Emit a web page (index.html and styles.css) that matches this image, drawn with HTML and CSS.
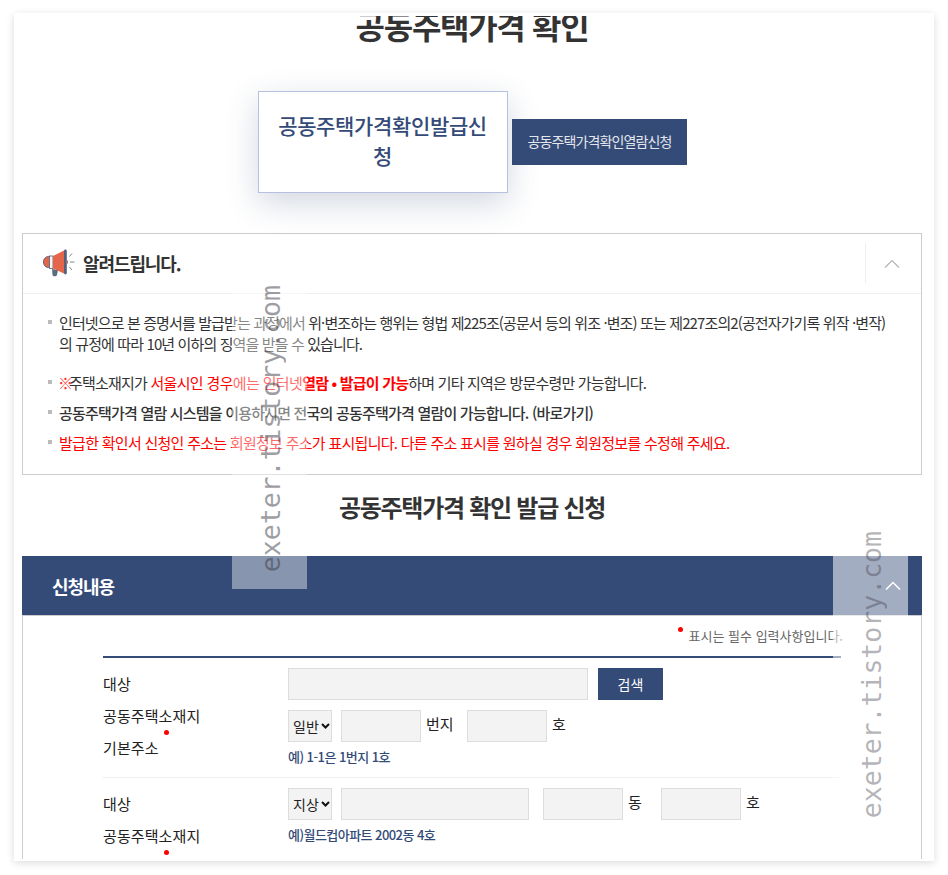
FILE: index.html
```html
<!DOCTYPE html>
<html lang="ko">
<head>
<meta charset="utf-8">
<title>공동주택가격 확인</title>
<link rel="stylesheet" href="styles.css">
</head>
<body>
<main class="card">
  <div class="scroll">
    <h1 class="page-title">공동주택가격 확인</h1>
    <div class="tabs">
      <a class="tab tab-on">공동주택가격확인발급신청</a>
      <a class="tab tab-off">공동주택가격확인열람신청</a>
    </div>
    <section class="notice">
      <header class="notice-head">
        <svg class="mega" viewBox="0 0 32 28" width="32" height="28" aria-hidden="true">
          <path d="M9 20l6 1-1 5c-.4 1.700-4 1.700-4.500 0z" fill="#5d6d80"/>
          <path d="M7 7.500C3 7 .5 9.500.5 13s2.500 6 6.500 5.500z" fill="#e4654a" stroke="#54617a" stroke-width="1"/>
          <rect x="6.500" y="7" width="3.500" height="12.500" fill="#f4f4f6" stroke="#54617a" stroke-width=".8"/>
          <path d="M10 7L21 1.500v23L10 19.500z" fill="#e4654a"/>
          <rect x="21" y=".5" width="2.800" height="25" rx="1.400" fill="#54617a"/>
          <path d="M24 11c1.500.5 1.500 3.500 0 4" fill="#e4654a"/>
          <path d="M26.500 7.500l2.500-3M27 13h4.500M26.500 18l2.500 3" stroke="#7d8796" stroke-width="1" fill="none"/>
        </svg>
        <h2 class="notice-title">알려드립니다.</h2>
        <div class="notice-toggle">
          <svg viewBox="0 0 16 9" width="16" height="9" aria-hidden="true"><path d="M1 8.500L8 1.500l7 7" fill="none" stroke="#b4b4b4" stroke-width="1.200"/></svg>
        </div>
      </header>
      <ul class="notice-list">
        <li class="gap">인터넷으로 본 증명서를 발급받는 과정에서 위·변조하는 행위는 형법 제225조(공문서 등의 위조 ·변조) 또는 제227조의2(공전자가기록 위작 ·변작)<br>의 규정에 따라 10년 이하의 징역을 받을 수 있습니다.</li>
        <li><span class="red mark-ref">※</span>주택소재지가 <span class="red seoul">서울시인 경우에는 인터넷</span><b class="red">열람 • 발급이 가능</b>하며 기타 지역은 방문수령만 가능합니다.</li>
        <li class="strong">공동주택가격 열람 시스템을 이용하시면 전국의 공동주택가격 열람이 가능합니다. (바로가기)</li>
        <li class="red wide">발급한 확인서 신청인 주소는 회원정보 주소가 표시됩니다. 다른 주소 표시를 원하실 경우 회원정보를 수정해 주세요.</li>
      </ul>
    </section>
    <h2 class="sub-title">공동주택가격 확인 발급 신청</h2>
    <section class="apply">
      <header class="apply-head">
        <h3 class="apply-title">신청내용</h3>
        <svg viewBox="0 0 16 9" width="16" height="9" aria-hidden="true"><path d="M1 8.500L8 1.500l7 7" fill="none" stroke="#fff" stroke-width="1.500"/></svg>
      </header>
      <div class="apply-body">
        <p class="req-note"><i class="dot"></i>표시는 필수 입력사항입니다.</p>
        <div class="form">
          <div class="group">
            <div class="labels">
              <span>대상</span>
              <span class="req">공동주택소재지</span>
              <span>기본주소</span>
            </div>
            <div class="fields">
              <div class="row">
                <input class="inp w300" type="text">
                <button class="search" type="button">검색</button>
              </div>
              <div class="row">
                <select class="sel"><option>일반</option></select>
                <input class="inp w80" type="text">
                <span class="unit u-bunji">번지</span>
                <input class="inp w80" type="text">
                <span class="unit">호</span>
              </div>
              <p class="hint">예) 1-1은 1번지 1호</p>
            </div>
          </div>
          <div class="group group-open">
            <div class="labels">
              <span>대상</span>
              <span class="req">공동주택소재지</span>
            </div>
            <div class="fields">
              <div class="row">
                <select class="sel"><option>지상</option></select>
                <input class="inp w188" type="text">
                <input class="inp w80 m14" type="text">
                <span class="unit u-dong">동</span>
                <input class="inp w80" type="text">
                <span class="unit">호</span>
              </div>
              <p class="hint">예)월드컵아파트 2002동 4호</p>
            </div>
          </div>
        </div>
      </div>
    </section>
  </div>
  <div class="mark mark-a"><span>exeter.tistory.com</span></div>
  <div class="mark mark-b"><span>exeter.tistory.com</span></div>
</main>
</body>
</html>
```
FILE: styles.css
```css
* { box-sizing: border-box; }
html, body { margin: 0; padding: 0; background: #fff; }
body {
  height: 875px;
  overflow: hidden;
  padding: 13px 14px 0;
  font-family: "Noto Sans CJK KR", "Noto Sans", sans-serif;
  color: #222;
}
h1, h2, h3, p, ul { margin: 0; padding: 0; }
.card {
  position: relative;
  width: 920px;
  height: 848px;
  padding: 3px 0 2px;
  background: #fff;
  box-shadow: 0 2px 8px rgba(0, 0, 0, .14);
}
.scroll { height: 100%; overflow: hidden; padding: 0 12px 0 8px; }
.page-title {
  margin-top: -12px;
  height: 44px;
  line-height: 42px;
  text-align: center;
  font-size: 32px;
  font-weight: 700;
  letter-spacing: -1.3px;
  color: #333;
}
.tabs {
  display: flex;
  justify-content: center;
  align-items: center;
  gap: 4px;
  margin-top: 43px;
}
.tab { display: flex; align-items: center; justify-content: center; text-align: center; }
.tab-on {
  width: 250px;
  height: 102px;
  padding: 0 16px 4px;
  background: #fff;
  border: 1px solid #b5c1de;
  box-shadow: 0 10px 30px rgba(52, 75, 120, .22);
  color: #344b78;
  font-size: 21px;
  font-weight: 500;
  line-height: 30px;
  letter-spacing: -.35px;
}
.tab-off {
  width: 175px;
  height: 46px;
  padding: 0 0 3px 1px;
  background: #344b78;
  color: #e4e6ec;
  font-size: 14px;
  letter-spacing: -.9px;
}
.notice {
  margin-top: 40px;
  height: 242px;
  border: 1px solid #ccc;
}
.notice-head {
  display: flex;
  align-items: center;
  height: 60px;
  padding: 0 0 2px 20px;
  border-bottom: 1px solid #eee;
}
.mega { flex: none; }
.notice-title {
  flex: 1;
  margin-left: 8px;
  font-size: 18px;
  font-weight: 700;
  letter-spacing: -1.1px;
  color: #333;
}
.notice-toggle {
  display: flex;
  align-items: center;
  justify-content: center;
  width: 56px;
  height: 40px;
  padding: 2px 3px 0 0;
  border-left: 1px solid #eee;
}
.notice-list {
  list-style: none;
  padding: 18px 0 0 36px;
  font-size: 15px;
  line-height: 21px;
  letter-spacing: -.8px;
  color: #333;
}
.notice-list li { position: relative; margin-bottom: 9px; }
.notice-list li.gap { margin-bottom: 18px; letter-spacing: -.88px; }
.notice-list li.wide { letter-spacing: -.72px; }
.notice-list li::before {
  content: "";
  position: absolute;
  left: -11px;
  top: 8px;
  width: 4px;
  height: 4px;
  background: #bbb;
}
.red { color: #f00; }
.mark-ref { letter-spacing: -4px; font-weight: 300; color: #f33; margin-left: -1px; }
.seoul { letter-spacing: -.65px; }
.strong { font-weight: 500; }
.sub-title {
  margin-top: 14px;
  height: 36px;
  line-height: 36px;
  text-align: center;
  font-size: 24px;
  font-weight: 700;
  letter-spacing: -1.26px;
  color: #333;
}
.apply { margin-top: 31px; }
.apply-head {
  display: flex;
  align-items: center;
  justify-content: space-between;
  height: 59px;
  padding: 0 21px 0 30px;
  background: #344b78;
}
.apply-title {
  font-size: 18px;
  font-weight: 700;
  letter-spacing: -1.1px;
  color: #fff;
}
.apply-body {
  height: 400px;
  padding: 0 80px;
  border: 1px solid #ccc;
}
.req-note {
  height: 40px;
  margin-right: -2px;
  padding-top: 9px;
  text-align: right;
  font-size: 13px;
  line-height: 22px;
  color: #666;
}
.dot {
  display: inline-block;
  width: 5px;
  height: 5px;
  margin-right: 6px;
  border-radius: 50%;
  background: #f00;
  vertical-align: 9px;
}
.form { border-top: 2px solid #344b78; }
.group {
  display: flex;
  padding: 10px 0;
  border-bottom: 1px solid #eee;
}
.group-open { border-bottom: 0; }
.labels {
  display: flex;
  flex-direction: column;
  flex: none;
  width: 185px;
  font-size: 15px;
  letter-spacing: .1px;
  color: #222;
}
.labels span { height: 32px; line-height: 32px; }
.req { position: relative; }
.req::after {
  content: "";
  position: absolute;
  left: 61px;
  top: 30px;
  width: 5px;
  height: 5px;
  border-radius: 50%;
  background: #f00;
}
.fields { flex: 1; display: flex; flex-direction: column; gap: 10px; }
.row { display: flex; align-items: flex-start; height: 32px; }
.inp, .sel {
  height: 32px;
  border: 1px solid #ddd;
  background: #f3f3f3;
  border-radius: 0;
  padding: 0;
}
.w300 { width: 300px; }
.w80 { width: 80px; }
.w188 { width: 188px; }
.m14 { margin-left: 14px; }
.sel {
  appearance: none;
  width: 44px;
  margin-right: 9px;
  padding-left: 4px;
  font-family: inherit;
  font-size: 14px;
  color: #222;
  background-image: url("data:image/svg+xml,%3Csvg xmlns='http://www.w3.org/2000/svg' width='9' height='6'%3E%3Cpath d='M1 1l3.500 3.500L8 1' fill='none' stroke='%23111' stroke-width='2'/%3E%3C/svg%3E");
  background-repeat: no-repeat;
  background-position: right 1px center;
}
.search {
  width: 65px;
  height: 32px;
  margin-left: 10px;
  border: 0;
  background: #344b78;
  color: #fff;
  font-family: inherit;
  font-size: 14px;
}
.unit {
  width: 46px;
  padding-left: 5px;
  font-size: 15px;
  line-height: 28px;
  color: #222;
}
.u-bunji { width: 46px; }
.u-dong { width: 38px; }
.hint {
  margin-top: -5px;
  height: 20px;
  font-size: 13px;
  font-weight: 500;
  line-height: 20px;
  letter-spacing: -.55px;
  color: #344b78;
}
.mark { position: absolute; width: 75px; height: 321px; padding-left: 2px; display: flex; justify-content: center; align-items: center; pointer-events: none; }
.mark span {
  writing-mode: vertical-rl;
  transform: rotate(180deg);
  font-family: "DejaVu Sans Mono", monospace;
  font-size: 26.500px;
  white-space: nowrap;
}
.mark-a { left: 218px; top: 255px; background: rgba(255, 255, 255, .41); }
.mark-a span { color: rgba(60, 60, 70, .5); }
.mark-b { left: 819px; top: 501px; background: rgba(255, 255, 255, .55); }
.mark-b span { color: rgba(60, 60, 70, .4); }
```
